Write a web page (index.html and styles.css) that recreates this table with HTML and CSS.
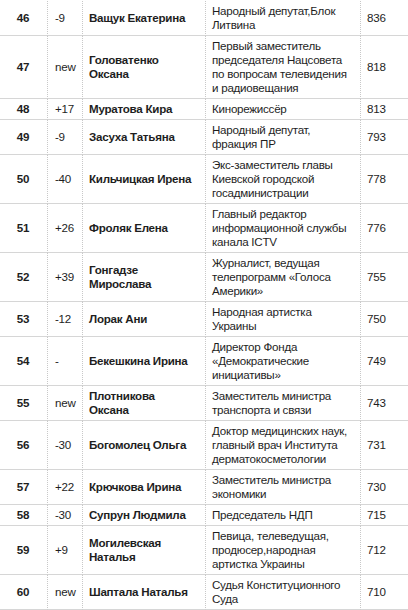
FILE: index.html
```html
<!DOCTYPE html>
<html lang="ru">
<head>
<meta charset="utf-8">
<title>Рейтинг</title>
<link rel="stylesheet" href="styles.css">
</head>
<body>
<table class="rating">
  <tr><td class="pos">46</td><td class="chg">-9</td><td class="name">Ващук Екатерина</td><td class="role">Народный депутат,Блок Литвина</td><td class="score">836</td></tr>
  <tr><td class="pos">47</td><td class="chg">new</td><td class="name">Головатенко Оксана</td><td class="role">Первый заместитель председателя Нацсовета по вопросам телевидения и радиовещания</td><td class="score">818</td></tr>
  <tr><td class="pos">48</td><td class="chg">+17</td><td class="name">Муратова Кира</td><td class="role">Кинорежиссёр</td><td class="score">813</td></tr>
  <tr><td class="pos">49</td><td class="chg">-9</td><td class="name">Засуха Татьяна</td><td class="role">Народный депутат, фракция ПР</td><td class="score">793</td></tr>
  <tr><td class="pos">50</td><td class="chg">-40</td><td class="name">Кильчицкая Ирена</td><td class="role">Экс-заместитель главы Киевской городской госадминистрации</td><td class="score">778</td></tr>
  <tr><td class="pos">51</td><td class="chg">+26</td><td class="name">Фроляк Елена</td><td class="role">Главный редактор информационной службы канала ICTV</td><td class="score">776</td></tr>
  <tr><td class="pos">52</td><td class="chg">+39</td><td class="name">Гонгадзе Мирослава</td><td class="role">Журналист, ведущая телепрограмм «Голоса Америки»</td><td class="score">755</td></tr>
  <tr><td class="pos">53</td><td class="chg">-12</td><td class="name">Лорак Ани</td><td class="role">Народная артистка Украины</td><td class="score">750</td></tr>
  <tr><td class="pos">54</td><td class="chg">-</td><td class="name">Бекешкина Ирина</td><td class="role">Директор Фонда «Демократические инициативы»</td><td class="score">749</td></tr>
  <tr><td class="pos">55</td><td class="chg">new</td><td class="name">Плотникова Оксана</td><td class="role">Заместитель министра транспорта и связи</td><td class="score">743</td></tr>
  <tr><td class="pos">56</td><td class="chg">-30</td><td class="name">Богомолец Ольга</td><td class="role">Доктор медицинских наук, главный врач Института дерматокосметологии</td><td class="score">731</td></tr>
  <tr><td class="pos">57</td><td class="chg">+22</td><td class="name">Крючкова Ирина</td><td class="role">Заместитель министра экономики</td><td class="score">730</td></tr>
  <tr><td class="pos">58</td><td class="chg">-30</td><td class="name">Супрун Людмила</td><td class="role">Председатель НДП</td><td class="score">715</td></tr>
  <tr><td class="pos">59</td><td class="chg">+9</td><td class="name">Могилевская Наталья</td><td class="role">Певица, телеведущая, продюсер,народная артистка Украины</td><td class="score">712</td></tr>
  <tr><td class="pos">60</td><td class="chg">new</td><td class="name">Шаптала Наталья</td><td class="role">Судья Конституционного Суда</td><td class="score">710</td></tr>
</table>
</body>
</html>
```

FILE: styles.css
```css
html, body {
  margin: 0;
  padding: 0;
  background: #ffffff;
  overflow: hidden;
}

body {
  padding-top: 1px;
}

.rating {
  width: 408px;
  table-layout: fixed;
  border-collapse: separate;
  border-spacing: 0;
  font-family: "Liberation Sans", Arial, sans-serif;
  font-size: 11.6px;
  letter-spacing: -0.25px;
  line-height: 14px;
  color: #1e1e1e;
}

.rating td {
  box-sizing: border-box;
  padding: 3px 6px;
  vertical-align: middle;
  border-bottom: 1px solid #d6d6d6;
  border-right: 1px dotted #c8c8c8;
}

.rating .pos {
  width: 48px;
  text-align: center;
  font-weight: bold;
  padding-left: 5px;
}

.rating .chg {
  width: 35px;
  padding-left: 7px;
  padding-right: 2px;
}

.rating .name {
  width: 123px;
  font-weight: bold;
  padding-right: 8px;
}

.rating .role {
  width: 155px;
  padding-left: 6px;
  padding-right: 6px;
}

.rating .score {
  width: 47px;
  border-right: none;
}
```
